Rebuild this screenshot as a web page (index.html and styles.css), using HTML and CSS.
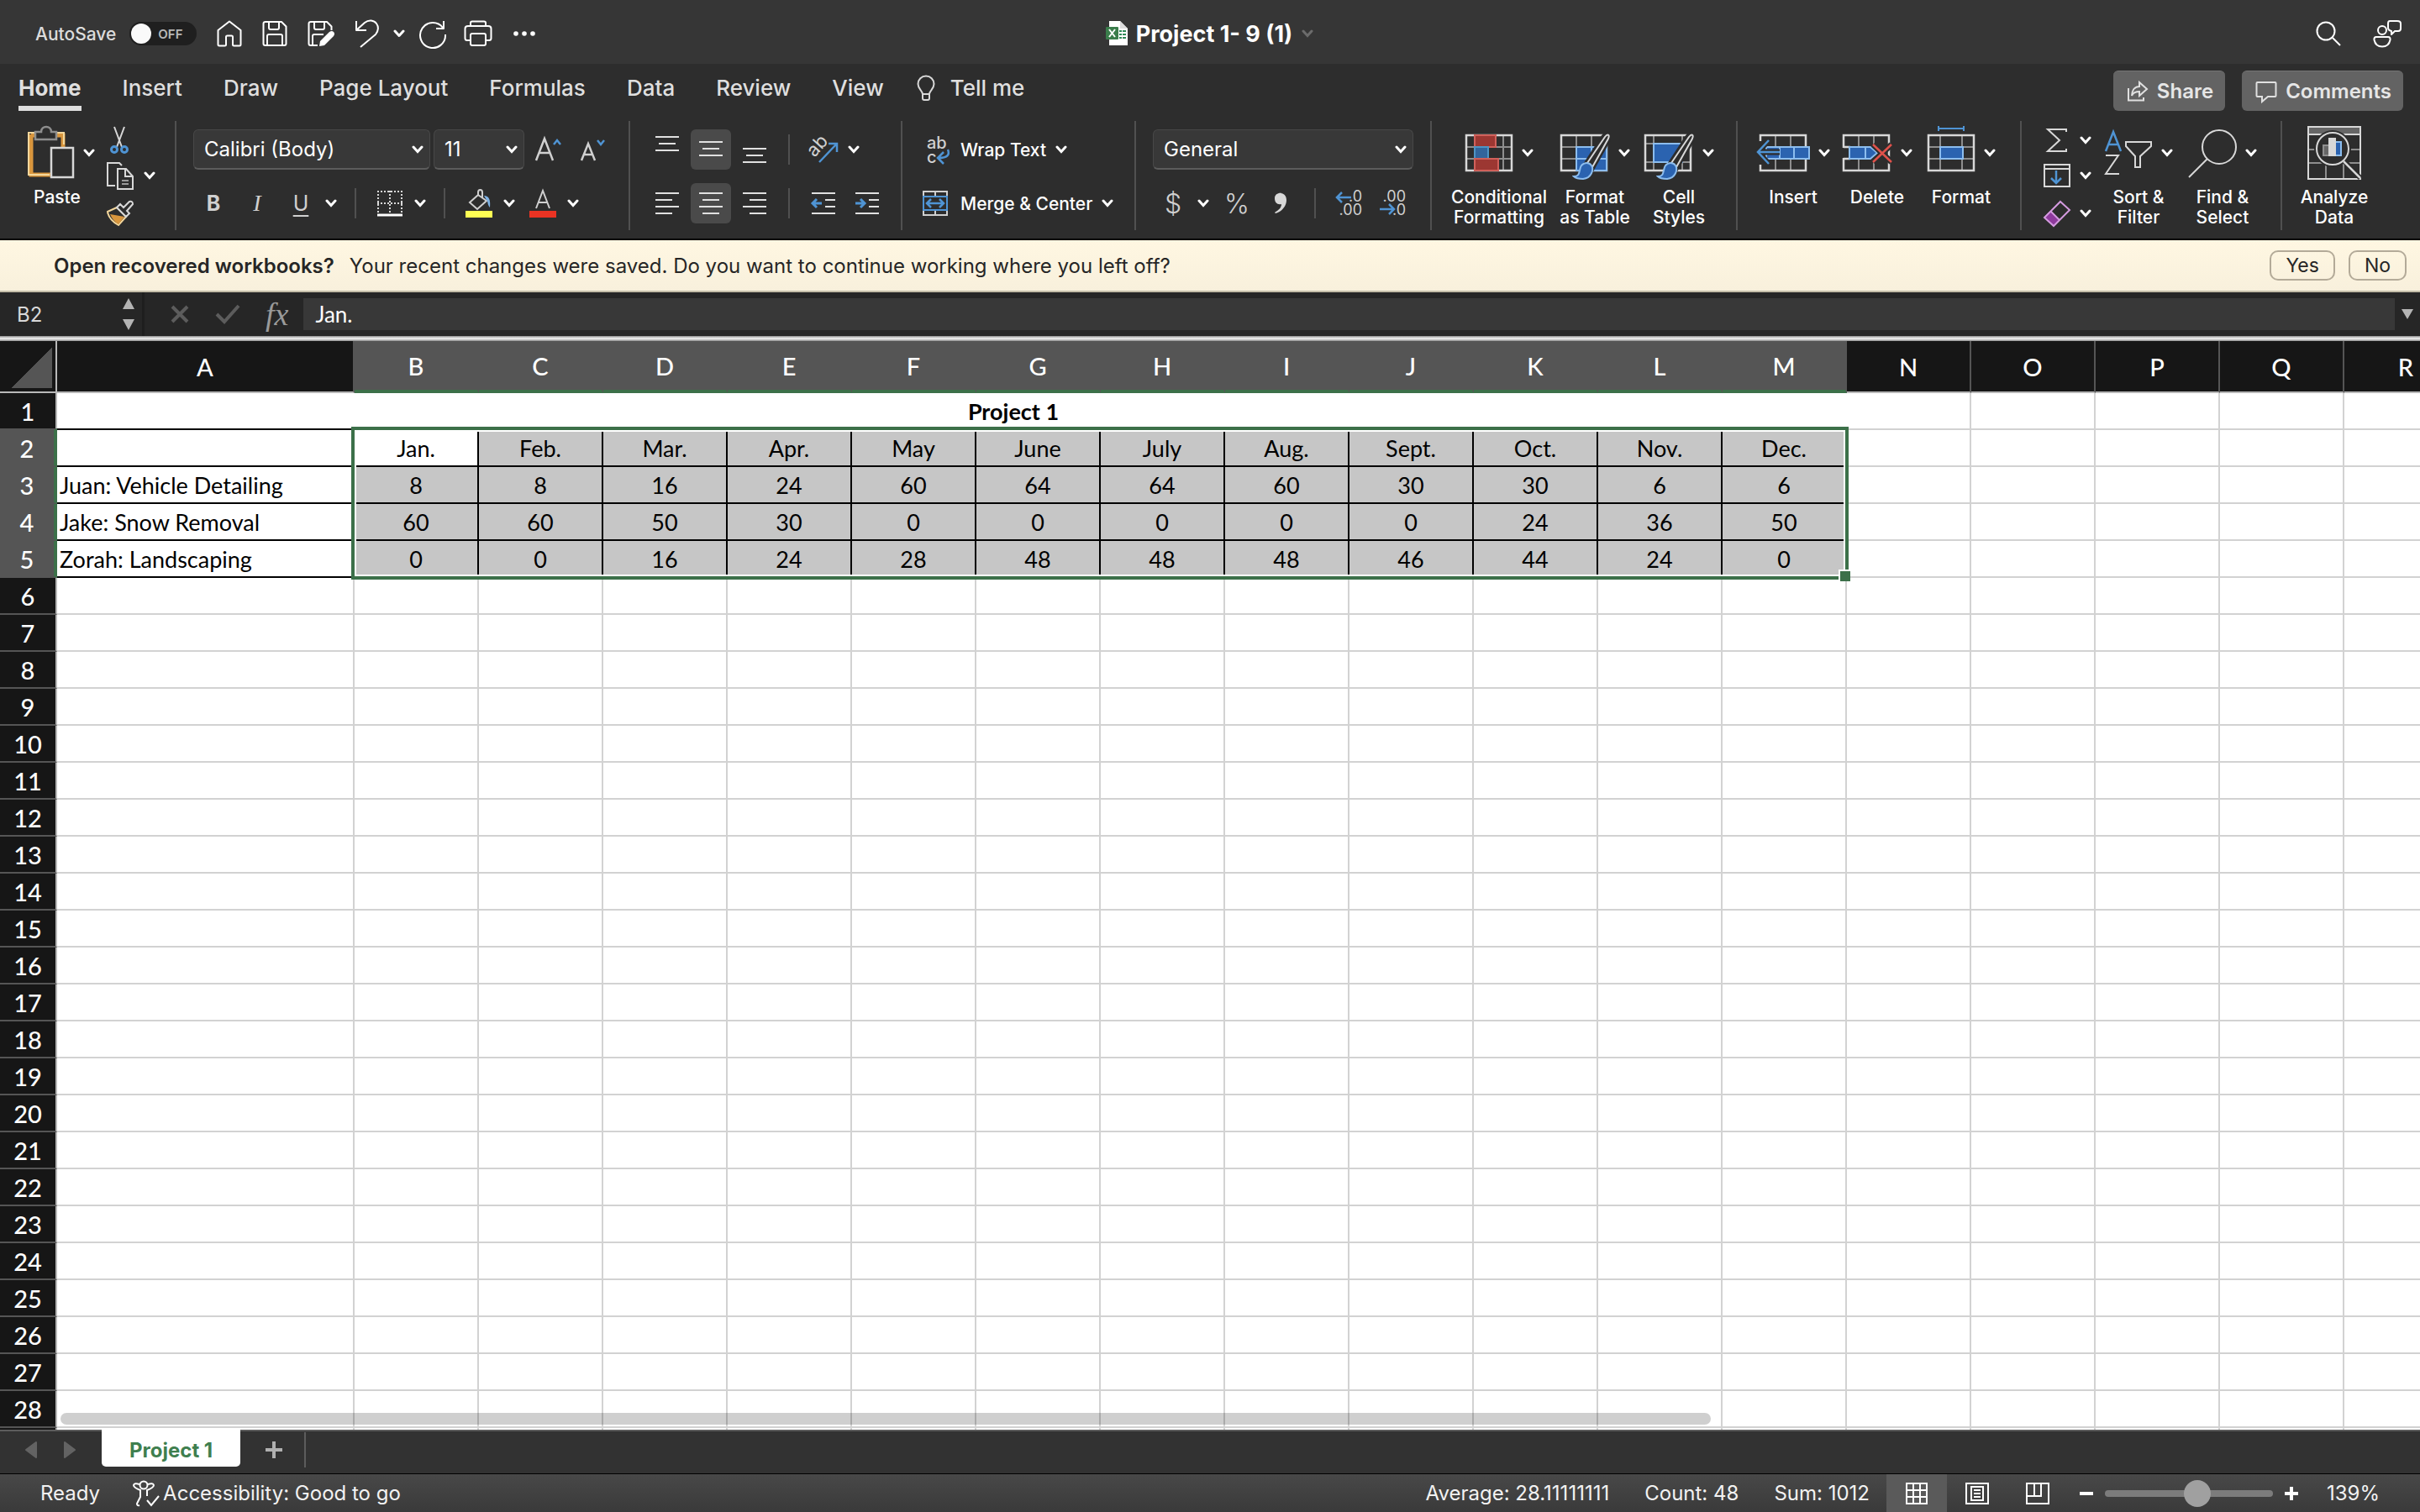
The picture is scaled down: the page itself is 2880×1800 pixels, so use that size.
FILE: index.html
```html
<!DOCTYPE html>
<html lang="en">
<head>
  <meta charset="UTF-8">
  <meta name="viewport" content="width=device-width, initial-scale=1.0">
  <title>Project 1- 9 (1)</title>
  <link rel="stylesheet" href="styles.css">
</head>
<body>
  <!-- shared shapes -->
  <svg class="defs" aria-hidden="true">
    <symbol id="chev" viewBox="0 0 14 10"><path d="M2 2l5 5.500 5-5.500" fill="none" stroke="currentColor" stroke-width="3" stroke-linecap="round"/></symbol>
    <symbol id="brush" viewBox="0 0 46 56">
      <path d="M18 36L38 5c3-4 7-3 5 2L24 41z" fill="#2d2d2d" stroke="#2d2d2d" stroke-width="7"/>
      <path d="M18 36L39 5c3-4 6-3 4 2L24 41z" fill="#2d2d2d" stroke="#d8d8d8" stroke-width="2"/>
      <path d="M2 52c7 0 6-5 8-11 2-5 9-7 13-2 3 5 0 15-10 16-5 0-9-1-11-3z" fill="#2b63b0" stroke="#8cbdee" stroke-width="2"/>
    </symbol>
  </svg>

  <header class="titlebar">
    <div class="quick">
      <label for="autosave">AutoSave</label>
      <span class="toggle"><input type="checkbox" id="autosave"><span>OFF</span></span>
      <button aria-label="Home"><svg width="30" height="32" viewBox="0 0 30 32"><path d="M1.500 12L15 1.500 28.500 12v17q0 1.500-1.500 1.500h-6.500q-1.500 0-1.500-1.500V20q0-1.500-1.500-1.500h-5q-1.500 0-1.500 1.500v9q0 1.500-1.500 1.500H3q-1.500 0-1.500-1.500z"/></svg></button>
      <button aria-label="Save"><svg width="30" height="32" viewBox="0 0 30 32"><path d="M4 2h19l5.500 5.500V28q0 2-2 2h-23q-2 0-2-2V4q0-2 2.500-2zM8 2v7q0 2 2 2h8q2 0 2-2V2M6 30V19q0-2 2-2h14q2 0 2 2v11"/></svg></button>
      <button aria-label="Save as"><svg width="32" height="32" viewBox="0 0 32 32"><path d="M12 30H3.500q-2 0-2-2V4q0-2 2.500-2h19l5.500 5.500V12M8 2v7q0 2 2 2h8q2 0 2-2V2M6 30V19q0-2 2-2h11"/><path d="M14 31l1-6 11-11q3-2 5 0t0 5L20 30z" fill="#fff" stroke="none"/></svg></button>
      <button aria-label="Undo"><svg width="30" height="34" viewBox="0 0 30 34"><path d="M2 2v11h12M2 13L12 4c5-4 11-3 14 1s2 9-1 13L7 33"/></svg></button>
      <button class="tight" aria-label="Undo list"><svg width="14" height="10"><use href="#chev"/></svg></button>
      <button aria-label="Redo"><svg width="34" height="34" viewBox="0 0 34 34"><path d="M30 2v9h-9M29 10A15 15 0 1 0 32 18"/></svg></button>
      <button class="print" aria-label="Print"><svg width="34" height="32" viewBox="0 0 34 32"><path d="M8 24H4q-2.500 0-2.500-2.500V10Q1.500 7 5 7h24q3.500 0 3.500 3v11.500q0 2.500-2.500 2.500h-4M8 7V3q0-1.500 2-1.500h14q2 0 2 1.500v4M10 16h14q2 0 2 2v10q0 2-2 2H10q-2 0-2-2V18q0-2 2-2z"/></svg></button>
      <button aria-label="More"><svg width="28" height="8" viewBox="0 0 28 8"><g fill="#fff" stroke="none"><circle cx="4" cy="4" r="2.800"/><circle cx="14" cy="4" r="2.800"/><circle cx="24" cy="4" r="2.800"/></g></svg></button>
    </div>
    <h1 class="doc">
      <svg width="28" height="32" viewBox="0 0 28 32"><path d="M5 1h13l9 9v20H5z" fill="#fff"/><path d="M18 1v9h9z" fill="#ddd"/><path d="M17 12h3v2h-3zM21 12h4v2h-4zM17 16h3v2h-3zM21 16h4v2h-4zM17 20h3v2h-3zM21 20h4v2h-4z" fill="#2f8a57"/><rect x="1" y="8" width="15" height="15" rx="1" fill="#3a7d4b"/><path d="M5 11l7 9M12 11l-7 9" stroke="#fff" stroke-width="2"/></svg>
      Project 1- 9 (1)
      <svg class="dim" width="18" height="10"><use href="#chev"/></svg>
    </h1>
    <div class="title-right">
      <button aria-label="Search"><svg width="30" height="30" viewBox="0 0 30 30"><circle cx="12" cy="12" r="10.500"/><path d="M20 20l9 9"/></svg></button>
      <button aria-label="Collaborate"><svg width="34" height="34" viewBox="0 0 34 34"><circle cx="11" cy="13" r="5"/><path d="M4 21h14q3 0 2.500 3.500c-1 5-4 8-9.500 8s-8.500-3-9.500-8Q1 21 4 21zM20 2h9q4 0 4 3v6q0 3-3 3h-4l-4 4v-4q-4-1-4-4V5q0-3 2-3z"/></svg></button>
    </div>
  </header>

  <nav class="tabs">
    <a href="#" class="active">Home</a>
    <a href="#">Insert</a>
    <a href="#">Draw</a>
    <a href="#">Page Layout</a>
    <a href="#">Formulas</a>
    <a href="#">Data</a>
    <a href="#">Review</a>
    <a href="#">View</a>
    <a href="#" class="tell"><svg width="22" height="32" viewBox="0 0 22 32"><path d="M7 23c0-4-5.500-6-5.500-12a9.500 9.500 0 0 1 19 0c0 6-5.500 8-5.500 12zM7 23v5q0 2 2 2h4q2 0 2-2v-5" fill="none" stroke="#d8d8d8" stroke-width="2"/></svg>Tell me</a>
    <div class="tab-actions">
      <button><svg width="26" height="26" viewBox="0 0 26 26"><path d="M2 9v14.500h18V20M15 7V2l9 8-9 8v-5c-5 0-8 2-9 5 0-6 3-11 9-11z"/></svg>Share</button>
      <button><svg width="26" height="26" viewBox="0 0 26 26"><path d="M2.500 2h21q1 0 1 1v15q0 1-1 1H15l-7 6v-6H2.500q-1 0-1-1V3q0-1 1-1z"/></svg>Comments</button>
    </div>
  </nav>

  <section class="ribbon">
    <div class="group clip">
      <button class="big">
        <span class="pic"><svg width="56" height="64" viewBox="0 0 56 64"><path d="M4 11h38v18M4 10v48h24" fill="none" stroke="#d9963d" stroke-width="5"/><path d="M10 8H1v50h25M34 8h9v14" fill="none" stroke="#f3d79c" stroke-width="2"/><path d="M9 16V7h7c0-8 12-8 12 0h6v9z" fill="#2d2d2d" stroke="#8e8e8e" stroke-width="2.500"/><rect x="28" y="26" width="26" height="35" fill="#2d2d2d" stroke="#d8d8d8" stroke-width="2.500"/></svg><svg width="14" height="10"><use href="#chev"/></svg></span>
        Paste
      </button>
      <div class="stack">
        <button aria-label="Cut"><svg width="32" height="34" viewBox="0 0 32 34"><path d="M10 1l9 24M22 1l-9 24" stroke="#d8d8d8" stroke-width="2" fill="none"/><g fill="none" stroke="#4f94d4" stroke-width="3"><circle cx="10" cy="28" r="3.500"/><circle cx="22" cy="28" r="3.500"/></g></svg></button>
        <button aria-label="Copy"><svg width="34" height="34" viewBox="0 0 34 34"><path d="M11 29H2V2h14l3 3M14 9h10l8 9v15H14zM23 9v9h9" fill="none" stroke="#d8d8d8" stroke-width="2"/><path d="M19 23h8M19 27h8" stroke="#9a9a9a" stroke-width="2"/></svg><svg width="14" height="10"><use href="#chev"/></svg></button>
        <button aria-label="Format painter"><svg width="34" height="32" viewBox="0 0 34 32"><path d="M2 14l11-5 11 11-9 10C8 26 3 21 2 14z" fill="#2d2d2d" stroke="#f3d79c" stroke-width="2"/><path d="M5 17l17 3-7 9C10 26 7 22 5 17z" fill="#d9963d"/><path d="M13 9l4-4 4 4 7-7q4-1 4 3l-7 8 3 3-4 4z" fill="#2d2d2d" stroke="#d8d8d8" stroke-width="2"/></svg></button>
      </div>
    </div>

    <div class="group">
      <div class="row">
        <label class="combo font-name"><select aria-label="Font"><option>Calibri (Body)</option></select><svg width="14" height="10"><use href="#chev"/></svg></label>
        <label class="combo font-size"><select aria-label="Font size"><option>11</option></select><svg width="14" height="10"><use href="#chev"/></svg></label>
        <button class="tool" aria-label="Increase font size"><svg width="32" height="32" viewBox="0 0 32 32"><path d="M2 29L12 3l10 26M6 20h12" fill="none" stroke="#d0d0d0" stroke-width="2.500"/><path d="M23 10l4-5 4 5" fill="none" stroke="#4f94d4" stroke-width="2.500"/></svg></button>
        <button class="tool" aria-label="Decrease font size"><svg width="32" height="32" viewBox="0 0 32 32"><path d="M4 29l8-20 8 20M7 22h10" fill="none" stroke="#d0d0d0" stroke-width="2.500"/><path d="M23 5l4 5 4-5" fill="none" stroke="#4f94d4" stroke-width="2.500"/></svg></button>
      </div>
      <div class="row">
        <button class="tool bold">B</button>
        <button class="tool italic">I</button>
        <button class="tool under">U</button>
        <button class="drop" aria-label="Underline style"><svg width="14" height="10"><use href="#chev"/></svg></button>
        <span class="sep"></span>
        <button class="tool" aria-label="Borders"><svg width="32" height="32" viewBox="0 0 32 32"><path d="M1 2h30M2 1v28M30 1v28M16 1v28M1 16h30" fill="none" stroke="#d8d8d8" stroke-width="2" stroke-dasharray="2 2"/><path d="M1 30h30" stroke="#fff" stroke-width="3"/></svg></button>
        <button class="drop" aria-label="Border list"><svg width="14" height="10"><use href="#chev"/></svg></button>
        <span class="sep"></span>
        <button class="tool" aria-label="Fill color"><svg width="32" height="34" viewBox="0 0 32 34"><path d="M15 7L5 16l9 8 11-10L15 7V4c0-4 5-4 5 0v7" fill="none" stroke="#d0d0d0" stroke-width="2"/><path d="M22 8c6 0 8 5 7 14-3-3-2-7-4-9z" fill="#7fb3e6"/><rect y="26" width="32" height="8" fill="#ffff54"/></svg></button>
        <button class="drop" aria-label="Fill color list"><svg width="14" height="10"><use href="#chev"/></svg></button>
        <button class="tool" aria-label="Font color"><svg width="32" height="34" viewBox="0 0 32 34"><path d="M8 23l8-21 8 21M11 16h10" fill="none" stroke="#d0d0d0" stroke-width="2"/><rect y="26" width="32" height="8" fill="#ea3323"/></svg></button>
        <button class="drop" aria-label="Font color list"><svg width="14" height="10"><use href="#chev"/></svg></button>
      </div>
    </div>

    <div class="group">
      <div class="row">
        <button class="tool" aria-label="Align top"><svg class="line" width="28" height="32" viewBox="0 0 28 32"><path d="M0 1h28M4 9h20M0 17h28"/></svg></button>
        <button class="tool on" aria-label="Align middle"><svg class="line" width="28" height="32" viewBox="0 0 28 32"><path d="M0 7h28M4 15h20M0 23h28"/></svg></button>
        <button class="tool" aria-label="Align bottom"><svg class="line" width="28" height="32" viewBox="0 0 28 32"><path d="M0 15h28M4 23h20M0 31h28"/></svg></button>
        <span class="sep"></span>
        <button class="tool" aria-label="Orientation"><svg width="34" height="34" viewBox="0 0 34 34"><text x="5" y="24" transform="rotate(-48 9 24)" font-size="22" fill="#d0d0d0" font-family="Inter, sans-serif">ab</text><path d="M12 32L32 11M23 10h10v10" fill="none" stroke="#4f94d4" stroke-width="2.500"/></svg></button>
        <button class="drop" aria-label="Orientation list"><svg width="14" height="10"><use href="#chev"/></svg></button>
      </div>
      <div class="row">
        <button class="tool" aria-label="Align left"><svg class="line" width="28" height="28" viewBox="0 0 28 28"><path d="M0 2h28M0 10h20M0 18h28M0 26h20"/></svg></button>
        <button class="tool on" aria-label="Center"><svg class="line" width="28" height="28" viewBox="0 0 28 28"><path d="M0 2h28M4 10h20M0 18h28M4 26h20"/></svg></button>
        <button class="tool" aria-label="Align right"><svg class="line" width="28" height="28" viewBox="0 0 28 28"><path d="M0 2h28M8 10h20M0 18h28M8 26h20"/></svg></button>
        <span class="sep"></span>
        <button class="tool" aria-label="Decrease indent"><svg class="line" width="28" height="28" viewBox="0 0 28 28"><path d="M0 2h28M16 10h12M16 18h12M0 26h28"/><path class="blue" d="M12 14H2M6 9l-5 5 5 5"/></svg></button>
        <button class="tool" aria-label="Increase indent"><svg class="line" width="28" height="28" viewBox="0 0 28 28"><path d="M0 2h28M16 10h12M16 18h12M0 26h28"/><path class="blue" d="M0 14h10M6 9l5 5-5 5"/></svg></button>
      </div>
    </div>

    <div class="group wrap">
      <div class="row">
        <button class="wide"><svg width="48" height="36" viewBox="0 0 48 36"><g font-size="20" fill="#d0d0d0" font-family="Inter, sans-serif"><text x="13" y="17">ab</text><text x="13" y="34">c</text></g><path d="M38 18q4 10-11 10M33 21l-7 7 7 7" fill="none" stroke="#4f94d4" stroke-width="2.500"/></svg>Wrap Text<svg width="14" height="10"><use href="#chev"/></svg></button>
      </div>
      <div class="row">
        <button class="wide"><svg width="48" height="32" viewBox="0 0 48 32"><path d="M9 2h28v28H9zM23 2v28" fill="none" stroke="#d0d0d0" stroke-width="2"/><rect x="9" y="8" width="28" height="16" fill="#2d2d2d" stroke="#4f94d4" stroke-width="2"/><path d="M13 16h20M18 11l-5 5 5 5M28 11l5 5-5 5" fill="none" stroke="#4f94d4" stroke-width="2.500"/></svg>Merge &amp; Center<svg width="14" height="10"><use href="#chev"/></svg></button>
      </div>
    </div>

    <div class="group">
      <div class="row">
        <label class="combo number"><select aria-label="Number format"><option>General</option></select><svg width="14" height="10"><use href="#chev"/></svg></label>
      </div>
      <div class="row">
        <button class="tool glyph">$</button>
        <button class="drop" aria-label="Currency list"><svg width="14" height="10"><use href="#chev"/></svg></button>
        <button class="tool glyph">%</button>
        <button class="tool" aria-label="Comma style"><svg width="16" height="26" viewBox="0 0 16 26"><path d="M1 7c0-8 14-9 14 2 0 8-6 14-13 16l-1-1c5-3 8-6 8-10-5 1-8-2-8-7z" fill="#d8d8d8"/></svg></button>
        <span class="sep"></span>
        <button class="tool" aria-label="Increase decimal"><svg width="34" height="34" viewBox="0 0 34 34"><g font-size="18" fill="#d0d0d0" font-family="Inter, sans-serif"><text x="32" y="15" text-anchor="end">.0</text><text x="32" y="31" text-anchor="end">.00</text></g><path d="M19 10H2M8 4l-6 6 6 6" fill="none" stroke="#4f94d4" stroke-width="2.500"/></svg></button>
        <button class="tool" aria-label="Decrease decimal"><svg width="34" height="34" viewBox="0 0 34 34"><g font-size="18" fill="#d0d0d0" font-family="Inter, sans-serif"><text x="32" y="15" text-anchor="end">.00</text><text x="32" y="31" text-anchor="end">.0</text></g><path d="M1 24h17M12 18l6 6-6 6" fill="none" stroke="#4f94d4" stroke-width="2.500"/></svg></button>
      </div>
    </div>

    <div class="group bigs">
      <button class="big cond">
        <span class="pic"><svg width="58" height="64" viewBox="0 0 58 64"><path d="M2 11h54v42H2zM12 11v42M46 11v42M2 25h54M2 39h54" fill="none" stroke="#8e8e8e" stroke-width="2"/><path d="M2 11h54v42H2z" fill="none" stroke="#d8d8d8" stroke-width="2.500"/><rect x="12" y="11" width="25" height="14" fill="#9c3732" stroke="#d0605a" stroke-width="2"/><rect x="12" y="25" width="16" height="14" fill="#32659c" stroke="#4f94c4" stroke-width="2"/><rect x="12" y="39" width="28" height="14" fill="#9c3732" stroke="#d0605a" stroke-width="2"/></svg><svg width="14" height="10"><use href="#chev"/></svg></span>
        Conditional<br>Formatting
      </button>
      <button class="big">
        <span class="pic"><svg width="60" height="64" viewBox="0 0 60 64"><path d="M2 25h54M2 39h54M20 11v42M38 11v42" fill="none" stroke="#8e8e8e" stroke-width="2"/><path d="M2 11h54v42H2z" fill="none" stroke="#d8d8d8" stroke-width="2.500"/><path d="M20 25h36v28H20zM20 39h36M38 25v28" fill="#2b63b0" stroke="#8cbdee" stroke-width="2"/><use href="#brush" x="15" y="8" width="46" height="56"/></svg><svg width="14" height="10"><use href="#chev"/></svg></span>
        Format<br>as Table
      </button>
      <button class="big">
        <span class="pic"><svg width="60" height="64" viewBox="0 0 60 64"><path d="M2 21h54M2 43h54M12 11v42M46 11v42" fill="none" stroke="#8e8e8e" stroke-width="2"/><path d="M2 11h54v42H2z" fill="none" stroke="#d8d8d8" stroke-width="2.500"/><path d="M12 21h34v22H12z" fill="#2b63b0" stroke="#8cbdee" stroke-width="2"/><use href="#brush" x="15" y="8" width="46" height="56"/></svg><svg width="14" height="10"><use href="#chev"/></svg></span>
        Cell<br>Styles
      </button>
    </div>

    <div class="group bigs">
      <button class="big">
        <span class="pic"><svg width="64" height="64" viewBox="0 0 64 64"><path d="M23 11v42M41 11v42" stroke="#8e8e8e" stroke-width="2"/><path d="M5 18v-7h54v14M5 46v7h54V39" fill="none" stroke="#d8d8d8" stroke-width="2.500"/><path d="M12 25h51v14H12zM28 25v14M45 25v14" fill="#2b63b0" stroke="#8cbdee" stroke-width="2"/><path d="M14 18L2 31l12 13M2 31h26" fill="none" stroke="#2d2d2d" stroke-width="7"/><path d="M15 17L2 31l13 14M2 31h26" fill="none" stroke="#4f94d4" stroke-width="2.500"/></svg><svg width="14" height="10"><use href="#chev"/></svg></span>
        Insert
      </button>
      <button class="big">
        <span class="pic"><svg width="60" height="64" viewBox="0 0 60 64"><path d="M20 11v14M20 39v14M38 11v14M38 39v14" fill="none" stroke="#8e8e8e" stroke-width="2"/><path d="M2 26V11h54v42H2V38M2 25h8M2 39h8" fill="none" stroke="#d8d8d8" stroke-width="2.500"/><path d="M9 25h25l8 7-8 7H9zM28 25v14" fill="#2b63b0" stroke="#8cbdee" stroke-width="2"/><path d="M37 22l22 21M59 22L37 43" stroke="#2d2d2d" stroke-width="7"/><path d="M37 22l22 21M59 22L37 43" stroke="#e0524b" stroke-width="2.500"/></svg><svg width="14" height="10"><use href="#chev"/></svg></span>
        Delete
      </button>
      <button class="big">
        <span class="pic"><svg width="58" height="64" viewBox="0 0 58 64"><path d="M2 25h54M2 39h54M16 11v42M42 11v42" fill="none" stroke="#8e8e8e" stroke-width="2"/><path d="M2 11h54v42H2z" fill="none" stroke="#d8d8d8" stroke-width="2.500"/><path d="M16 25h27v14H16z" fill="#2b63b0" stroke="#8cbdee" stroke-width="2"/><path d="M14 3h30M14 0v6M44 0v6" stroke="#4f94d4" stroke-width="2"/></svg><svg width="14" height="10"><use href="#chev"/></svg></span>
        Format
      </button>
    </div>

    <div class="group bigs editing">
      <div class="stack">
        <button aria-label="AutoSum"><svg width="32" height="32" viewBox="0 0 32 32"><path d="M27 6V3H5l14 13L5 29h22v-3" fill="none" stroke="#d8d8d8" stroke-width="2"/></svg><svg width="14" height="10"><use href="#chev"/></svg></button>
        <button aria-label="Fill"><svg width="32" height="30" viewBox="0 0 32 30"><path d="M1 2h30v26H1zM1 7h30" fill="none" stroke="#d8d8d8" stroke-width="2"/><path d="M15 9v15M9 18l6 6 6-6" fill="none" stroke="#4f94d4" stroke-width="2.500"/></svg><svg width="14" height="10"><use href="#chev"/></svg></button>
        <button aria-label="Clear"><svg width="32" height="32" viewBox="0 0 32 32"><path d="M8 13l11 11-8 7L1 20z" fill="#8e3a9d"/><path d="M20 2l11 10-19 19L1 21zM8 13l11 11" fill="none" stroke="#d59be0" stroke-width="2"/></svg><svg width="14" height="10"><use href="#chev"/></svg></button>
      </div>
      <button class="big">
        <span class="pic"><svg width="58" height="64" viewBox="0 0 58 64"><path d="M2 30l9-23 9 23M5 22h12" fill="none" stroke="#4f94d4" stroke-width="2.500"/><path d="M2 35h15L2 57h16" fill="none" stroke="#d8d8d8" stroke-width="2"/><path d="M26 19h30v5L43 36v13h-6V36L26 24z" fill="none" stroke="#d8d8d8" stroke-width="2"/></svg><svg width="14" height="10"><use href="#chev"/></svg></span>
        Sort &amp;<br>Filter
      </button>
      <button class="big">
        <span class="pic"><svg width="58" height="64" viewBox="0 0 58 64"><circle cx="37" cy="25" r="20" fill="none" stroke="#d8d8d8" stroke-width="2"/><path d="M23 39L1 61" stroke="#d8d8d8" stroke-width="2"/></svg><svg width="14" height="10"><use href="#chev"/></svg></span>
        Find &amp;<br>Select
      </button>
    </div>

    <div class="group bigs analyze">
      <button class="big">
        <span class="pic"><svg width="64" height="64" viewBox="0 0 64 64"><path d="M1 1h62v9H1z" fill="#666"/><path d="M1 28h62M1 44h62M22 44v19M43 44v19" stroke="#8e8e8e" stroke-width="2"/><path d="M1 1h62v62H1zM1 10h62" fill="none" stroke="#d8d8d8" stroke-width="2"/><circle cx="30" cy="27" r="22" fill="#2d2d2d"/><path d="M44 42l19 20" stroke="#2d2d2d" stroke-width="6"/><circle cx="30" cy="27" r="19" fill="#2d2d2d" stroke="#d8d8d8" stroke-width="2"/><path d="M43 42l20 20" stroke="#d8d8d8" stroke-width="2.500"/><rect x="19" y="23" width="8" height="12" fill="#666" stroke="#8e8e8e" stroke-width="2"/><rect x="33" y="19" width="7" height="16" fill="#2b63b0" stroke="#8cbdee" stroke-width="2"/><rect x="25" y="14" width="9" height="22" fill="#d8d8d8"/></svg></span>
        Analyze<br>Data
      </button>
    </div>
  </section>

  <section class="message">
    <strong>Open recovered workbooks?</strong>
    <span>Your recent changes were saved. Do you want to continue working where you left off?</span>
    <div class="message-actions">
      <button>Yes</button>
      <button>No</button>
    </div>
  </section>

  <section class="formula">
    <div class="namebox">
      <input aria-label="Name box" value="B2">
      <svg width="16" height="40" viewBox="0 0 16 40"><path d="M8 1l7 13H1zM8 39l7-13H1z" fill="#b4b4b4"/></svg>
    </div>
    <button aria-label="Cancel"><svg width="24" height="24" viewBox="0 0 24 24"><path d="M3 3l18 18M21 3L3 21" stroke="#5c5c5c" stroke-width="4"/></svg></button>
    <button aria-label="Enter"><svg width="30" height="24" viewBox="0 0 30 24"><path d="M2 12l9 9L28 2" fill="none" stroke="#5c5c5c" stroke-width="4"/></svg></button>
    <button class="fx">fx</button>
    <input class="formula-input" aria-label="Formula" value="Jan.">
    <button class="expand" aria-label="Expand"><svg width="14" height="12" viewBox="0 0 14 12"><path d="M0 0h14L7 12z" fill="#b4b4b4"/></svg></button>
  </section>

  <main class="sheet">
    <table id="grid"></table>
    <div class="selection"></div>
    <div class="scrollbar"></div>
  </main>

  <nav class="sheet-tabs">
    <button aria-label="Previous sheet"><svg width="16" height="22" viewBox="0 0 16 22"><path d="M14 2v18L2 11z" fill="#636363" stroke="#636363" stroke-width="2" stroke-linejoin="round"/></svg></button>
    <button aria-label="Next sheet"><svg width="16" height="22" viewBox="0 0 16 22"><path d="M2 2v18l12-9z" fill="#636363" stroke="#636363" stroke-width="2" stroke-linejoin="round"/></svg></button>
    <a href="#" class="sheet-tab">Project 1</a>
    <button class="add" aria-label="Add sheet"><svg width="20" height="20" viewBox="0 0 20 20"><path d="M10 0v20M0 10h20" stroke="#b0b0b0" stroke-width="4"/></svg></button>
  </nav>

  <footer class="status">
    <span class="ready">Ready</span>
    <button class="access"><svg width="34" height="32" viewBox="0 0 34 32"><path d="M9 5q-6-2-7 1 0 3 8 6v8l-4 8q0 3 3 2M19 5q6-2 7 1 0 3-8 6v7M18 24l5 6L32 19" fill="none" stroke="#fff" stroke-width="2"/><circle cx="14" cy="6" r="4.500" fill="none" stroke="#fff" stroke-width="2"/></svg>Accessibility: Good to go</button>
    <div class="stats">
      <span>Average: 28.11111111</span>
      <span>Count: 48</span>
      <span>Sum: 1012</span>
    </div>
    <button class="view on" aria-label="Normal view"><svg width="28" height="28" viewBox="0 0 28 28"><path d="M2 2h24v24H2zM10 2v24M18 2v24M2 10h24M2 18h24" fill="none" stroke="#fff" stroke-width="2"/></svg></button>
    <button class="view" aria-label="Page layout view"><svg width="28" height="28" viewBox="0 0 28 28"><path d="M1 2h26v24H1zM7 6h14v16H7zM10 10h8M10 14h8M10 18h8" fill="none" stroke="#fff" stroke-width="2"/></svg></button>
    <button class="view" aria-label="Page break view"><svg width="28" height="28" viewBox="0 0 28 28"><path d="M1 2h26v24H1zM10 2v15M18 2v15H2" fill="none" stroke="#fff" stroke-width="2"/></svg></button>
    <button class="zoom-btn" aria-label="Zoom out"><svg width="16" height="16" viewBox="0 0 16 16"><path d="M0 8h16" stroke="#fff" stroke-width="4"/></svg></button>
    <input type="range" aria-label="Zoom" min="0" max="100" value="56">
    <button class="zoom-btn" aria-label="Zoom in"><svg width="16" height="16" viewBox="0 0 16 16"><path d="M0 8h16M8 0v16" stroke="#fff" stroke-width="4"/></svg></button>
    <span class="percent">139%</span>
  </footer>

  <script src="script.js"></script>
</body>
</html>
```

FILE: styles.css
```css
* {
    box-sizing: border-box;
}

body {
    margin: 0;
    height: 100vh;
    display: flex;
    flex-direction: column;
    overflow: hidden;
    background-color: #2d2d2d;
    color: #fff;
    font-family: Inter, "Liberation Sans", sans-serif;
    font-size: 22px;
}

button, input, select {
    margin: 0;
    padding: 0;
    border: none;
    background: none;
    color: inherit;
    font: inherit;
}

button {
    display: flex;
    align-items: center;
    justify-content: center;
}

a {
    color: inherit;
    text-decoration: none;
}

svg {
    display: block;
    flex: none;
    overflow: visible;
}

.defs {
    position: absolute;
    width: 0;
    height: 0;
}

/* title bar */
.titlebar {
    flex: none;
    height: 76px;
    padding: 4px 22px 0 42px;
    display: grid;
    grid-template-columns: 1fr auto 1fr;
    align-items: center;
    background-color: #363636;
}

.titlebar button svg {
    fill: none;
    stroke: #fff;
    stroke-width: 2;
    stroke-linejoin: round;
}

.quick {
    display: flex;
    align-items: center;
    gap: 24px;
}

.quick label {
    font-size: 21px;
    font-weight: 500;
    color: #dcdcdc;
    margin-right: -8px;
}

.quick .tight {
    margin: 0 -8px;
}

.quick .print {
    margin-left: -4px;
}

.toggle {
    display: flex;
    align-items: center;
    gap: 8px;
    width: 80px;
    height: 28px;
    border-radius: 14px;
    background-color: #1f1f1f;
    color: #b8b8b8;
    font-size: 15px;
    font-weight: 600;
}

.toggle input {
    appearance: none;
    width: 24px;
    height: 24px;
    margin-left: 2px;
    border-radius: 50%;
    background-color: #fafafa;
}

.doc {
    display: flex;
    align-items: center;
    gap: 9px;
    margin: 0;
    padding-right: 20px;
    font-size: 27px;
    font-weight: 700;
}

.dim {
    color: #6c6c6c;
}

.title-right {
    display: flex;
    justify-content: flex-end;
    gap: 38px;
}

/* ribbon tabs */
.tabs {
    flex: none;
    height: 68px;
    padding: 8px 20px 0 22px;
    display: flex;
    align-items: flex-start;
    gap: 49px;
    font-size: 26px;
    font-weight: 500;
    color: #dfdfdf;
}

.tabs a {
    height: 48px;
    line-height: 42px;
    border-bottom: 6px solid transparent;
}

.tabs .active {
    font-weight: 700;
    border-image: linear-gradient(#dfdfdf, #dfdfdf) 1;
}

.tabs .tell {
    display: flex;
    align-items: center;
    gap: 18px;
    margin-left: -10px;
}

.tab-actions {
    display: flex;
    gap: 20px;
    margin-left: auto;
}

.tab-actions button {
    height: 48px;
    padding: 0 14px 0 16px;
    gap: 10px;
    border-radius: 6px;
    background-color: #636363;
    border-top: 1px solid #757575;
    color: #e6e6e6;
    font-size: 24px;
    font-weight: 600;
}

.tab-actions svg {
    fill: none;
    stroke: #e0e0e0;
    stroke-width: 2;
}

/* ribbon */
.ribbon {
    flex: none;
    height: 142px;
    padding-bottom: 16px;
    display: grid;
    grid-template-columns: 210px 540px 324px 278px 352px 364px 338px 310px 1fr;
    border-bottom: 2px solid #000;
}

.group {
    display: flex;
    flex-direction: column;
    gap: 16px;
    padding: 10px 0 0 20px;
    border-right: 2px solid #505050;
}

.group:last-child {
    border-right: none;
}

.row {
    display: flex;
    align-items: center;
    gap: 4px;
    height: 48px;
}

.tool {
    width: 48px;
    height: 48px;
    border-radius: 6px;
    color: #d0d0d0;
    font-size: 28px;
}

.tool.on {
    background-color: #4a4a4a;
}

.bold {
    font-size: 25px;
    font-weight: 700;
}

.italic {
    font-family: "Liberation Serif", serif;
    font-style: italic;
}

.under {
    font-size: 25px;
    text-decoration: underline;
    text-decoration-thickness: 2px;
    text-underline-offset: 5px;
}

.glyph {
    font-size: 32px;
    font-weight: 300;
}

.drop {
    width: 20px;
    height: 48px;
    padding-right: 4px;
}

.sep {
    width: 2px;
    height: 36px;
    margin: 0 12px;
    background-color: #505050;
}

.combo {
    display: flex;
    align-items: center;
    height: 48px;
    padding: 0 7px 0 12px;
    border: 1px solid #484848;
    border-bottom: 2px solid #5c5c5c;
    border-radius: 6px;
    background-color: #383838;
}

.combo select {
    appearance: none;
    flex: 1;
    min-width: 0;
    font-size: 24px;
}

.font-name {
    width: 282px;
}

.font-size {
    width: 108px;
}

.number {
    width: 310px;
}

.line {
    fill: none;
    stroke: #e0e0e0;
    stroke-width: 2;
}

.blue {
    stroke: #4f94d4;
    stroke-width: 3;
}

.wrap {
    padding-left: 16px;
}

.wide {
    height: 48px;
    gap: 11px;
    font-size: 21px;
    font-weight: 500;
}

.wide svg:first-child {
    margin-right: -6px;
}

.bigs {
    flex-direction: row;
    gap: 0;
    padding: 6px 0 0 16px;
}

.big {
    flex-direction: column;
    justify-content: flex-start;
    width: 100px;
    font-size: 21px;
    font-weight: 500;
    line-height: 24px;
    white-space: nowrap;
}

.cond {
    width: 128px;
}

.pic {
    display: flex;
    align-items: center;
    gap: 10px;
    height: 64px;
    margin-bottom: 9px;
}

.clip {
    flex-direction: row;
    gap: 10px;
    padding: 6px 0 0 24px;
}

.clip .big {
    align-items: flex-start;
    width: 92px;
    text-indent: 16px;
}

.clip .pic {
    padding-left: 9px;
}

.stack {
    display: flex;
    flex-direction: column;
    gap: 5px;
}

.stack button {
    height: 40px;
    gap: 11px;
    justify-content: flex-start;
}

.stack button:first-child {
    height: 34px;
}

.editing {
    padding-left: 26px;
}

.editing .big:nth-child(2) {
    margin-left: 6px;
}

.analyze {
    padding-left: 12px;
}

/* recovery message */
.message {
    flex: none;
    height: 62px;
    padding: 0 16px 0 64px;
    display: flex;
    align-items: center;
    gap: 18px;
    background: linear-gradient(#fff7e2, #f8f0dc);
    border-bottom: 2px solid #c4bda9;
    color: #262626;
    font-size: 24px;
}

.message strong {
    font-weight: 600;
}

.message-actions {
    display: flex;
    gap: 16px;
    margin-left: auto;
}

.message button {
    height: 36px;
    padding: 0 17px;
    border: 2px solid #b3aa98;
    border-radius: 10px;
    font-size: 23px;
}

/* formula bar, with the pale splitter along its lower edge */
.formula {
    flex: none;
    height: 58px;
    padding-bottom: 6px;
    display: flex;
    align-items: center;
    background: linear-gradient(#8e8e8e, #f6f6f6 50%, #8e8e8e) bottom / 100% 6px no-repeat #262626;
}

.namebox {
    display: flex;
    align-items: center;
    width: 172px;
    height: 52px;
    padding: 0 8px 0 20px;
    border-right: 3px solid #1e1e1e;
    color: #d8d8d8;
}

.namebox input {
    flex: 1;
    min-width: 0;
    font-size: 24px;
}

.formula button {
    margin-left: 30px;
}

.formula .fx {
    color: #9a9a9a;
    font-family: "Liberation Serif", serif;
    font-style: italic;
    font-size: 38px;
    line-height: 38px;
}

.formula-input {
    flex: 1;
    height: 38px;
    margin-left: 18px;
    padding: 0 14px;
    background-color: #383838;
    font-family: Lato, sans-serif;
    font-size: 26px;
}

.formula .expand {
    margin: 0 8px;
}

/* sheet */
.sheet {
    flex: 1;
    min-height: 0;
    position: relative;
    overflow: hidden;
    background-color: #fff;
    color: #000;
    font-family: Lato, Carlito, sans-serif;
    font-size: 27px;
}

table {
    table-layout: fixed;
    width: 2938px;
    border-collapse: separate;
    border-spacing: 0;
}

th, td {
    height: 44px;
    padding: 2px 0 0;
    border-right: 2px solid #d2d2d2;
    border-bottom: 2px solid #d2d2d2;
    line-height: 32px;
    text-align: center;
    white-space: nowrap;
}

th {
    background-color: #161616;
    border-color: #555;
    color: #fff;
    font-size: 29px;
    font-weight: 500;
}

thead th {
    width: 148px;
    height: 62px;
    border-bottom-color: #b8b8b8;
}

thead th:nth-child(2) {
    width: 354px;
}

thead .corner {
    width: 68px;
    border-right-color: #b8b8b8;
    background: linear-gradient(135deg, #161616 50%, #555 50%) 14px 8px / 48px 48px no-repeat #161616;
}

thead .picked {
    background-color: #555;
    border-right-color: #555;
    border-bottom: 4px solid #3c7049;
}

tbody th {
    border-right-color: #b8b8b8;
}

tbody .picked {
    background-color: #555;
    border-right: 4px solid #3c7049;
    border-bottom-color: #555;
}

/* row 1 leaves its lower line to the cells of row 2 */
.row1 th, .row1 td {
    height: 42px;
    border-bottom: none;
}

.row2 th, .row2 td {
    height: 46px;
    border-top: 2px solid #d2d2d2;
}

.row2 th {
    border-top-color: #555;
}

.heading {
    font-weight: 700;
}

tbody .name, tbody .value {
    border-color: #000;
}

.name {
    padding-left: 3px;
    text-align: left;
}

.value {
    background-color: #c6c6c6;
}

.value.current {
    background-color: #fff;
}

.selection {
    position: absolute;
    left: 418px;
    top: 102px;
    width: 1782px;
    height: 182px;
    border: 4px solid #3c7049;
    box-shadow: inset 0 0 0 2px #fff;
}

.selection::after {
    content: "";
    position: absolute;
    right: -6px;
    bottom: -6px;
    width: 12px;
    height: 12px;
    background-color: #3c7049;
    border: solid #fff;
    border-width: 2px 0 0 2px;
}

.scrollbar {
    position: absolute;
    left: 72px;
    right: 844px;
    bottom: 6px;
    height: 14px;
    border-radius: 7px;
    background-color: rgba(0, 0, 0, 0.19);
}

/* sheet tabs */
.sheet-tabs {
    flex: none;
    height: 52px;
    padding: 0 0 6px 29px;
    display: flex;
    align-items: center;
    gap: 30px;
    background-color: #323232;
    border-top: 2px solid #5c5c5c;
}

.sheet-tab {
    align-self: flex-start;
    height: 44px;
    margin-top: -2px;
    padding: 0 33px;
    border-radius: 0 0 5px 5px;
    background-color: #fff;
    color: #3f7f4f;
    font-size: 24px;
    font-weight: 700;
    line-height: 50px;
}

.add {
    height: 42px;
    padding-right: 26px;
    border-right: 2px solid #5c5c5c;
}

/* status bar */
.status {
    flex: none;
    height: 46px;
    padding-right: 48px;
    display: flex;
    align-items: center;
    background: linear-gradient(#484848, #3a3a3a);
    border-top: 1px solid #000;
    font-size: 24px;
    color: #f2f2f2;
}

.ready {
    margin: 0 38px 0 48px;
}

.access {
    gap: 3px;
}

.stats {
    display: flex;
    gap: 42px;
    margin: 0 20px 0 auto;
}

.view {
    width: 72px;
    height: 45px;
}

.view.on {
    background-color: #5a5a5a;
}

.zoom-btn {
    width: 44px;
    height: 45px;
}

.status input {
    appearance: none;
    width: 200px;
    height: 8px;
    border-radius: 4px;
    background-color: #7c7c7c;
}

.status input::-webkit-slider-thumb {
    appearance: none;
    width: 32px;
    height: 32px;
    border-radius: 50%;
    background-color: #a0a0a0;
}

.percent {
    margin-left: 20px;
}
```

FILE: script.js
```js
var columns = 'ABCDEFGHIJKLMNOPQR'.split('');
var lastRow = 29;

var rows = {
  2: ['', 'Jan.', 'Feb.', 'Mar.', 'Apr.', 'May', 'June', 'July', 'Aug.', 'Sept.', 'Oct.', 'Nov.', 'Dec.'],
  3: ['Juan: Vehicle Detailing', 8, 8, 16, 24, 60, 64, 64, 60, 30, 30, 6, 6],
  4: ['Jake: Snow Removal', 60, 60, 50, 30, 0, 0, 0, 0, 0, 24, 36, 50],
  5: ['Zorah: Landscaping', 0, 0, 16, 24, 28, 48, 48, 48, 46, 44, 24, 0]
};

function addCell(row, tag, text, className) {
  var cell = document.createElement(tag);
  cell.textContent = text;
  if (className) cell.className = className;
  row.appendChild(cell);
  return cell;
}

var grid = document.getElementById('grid');
var head = grid.createTHead().insertRow();
addCell(head, 'th', '', 'corner');
columns.forEach(function (letter, i) {
  addCell(head, 'th', letter, i >= 1 && i <= 12 ? 'picked' : '');
});

var body = grid.createTBody();
for (var n = 1; n <= lastRow; n++) {
  var row = body.insertRow();
  row.className = 'row' + n;
  // row 29 only shows its top edge, so it carries no number
  addCell(row, 'th', n < lastRow ? n : '', rows[n] ? 'picked' : '');

  var start = 0;
  if (n === 1) {
    // the heading is centered over A to N
    addCell(row, 'td', 'Project 1', 'heading').colSpan = 14;
    start = 14;
  }

  for (var c = start; c < columns.length; c++) {
    var data = rows[n];
    if (data && c < data.length) {
      var kind = c === 0 ? 'name' : 'value';
      if (n === 2 && c === 1) kind += ' current';
      addCell(row, 'td', data[c], kind);
    } else {
      addCell(row, 'td', '');
    }
  }
}
```
